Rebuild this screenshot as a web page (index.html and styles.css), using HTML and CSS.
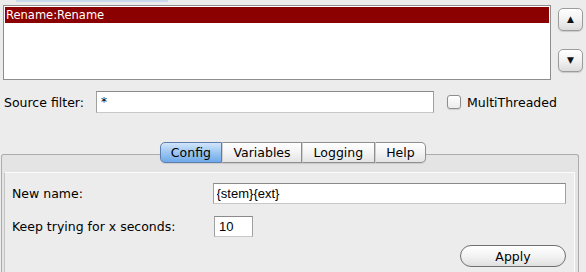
FILE: index.html
```html
<!DOCTYPE html>
<html lang="en">
<head>
    <meta charset="UTF-8">
    <title>Rename</title>
    <link rel="stylesheet" href="styles.css">
</head>
<body>
    <div class="top-strip"></div>

    <!-- step list with move buttons -->
    <div class="list-row">
        <div class="step-list">
            <div class="step selected">Rename:Rename</div>
        </div>
        <div class="move-buttons">
            <button class="move-btn">&#9650;</button>
            <button class="move-btn">&#9660;</button>
        </div>
    </div>

    <div class="filter-row">
        <label class="filter-label">Source filter:</label>
        <input type="text" class="filter-input" value="*">
        <span class="check-box"></span>
        <span class="check-label">MultiThreaded</span>
    </div>

    <div class="tab-area">
        <div class="tab-bar">
            <div class="tab active">Config</div>
            <div class="tab">Variables</div>
            <div class="tab">Logging</div>
            <div class="tab">Help</div>
        </div>
        <div class="tab-pane">
            <div class="tab-content">
                <div class="form-row">
                    <span class="form-label">New name:</span>
                    <input type="text" class="name-input" value="{stem}{ext}">
                </div>
                <div class="form-row">
                    <span class="form-label">Keep trying for x seconds:</span>
                    <input type="text" class="secs-input" value="10">
                </div>
                <div class="apply-row">
                    <button class="apply-btn">Apply</button>
                </div>
            </div>
        </div>
    </div>
</body>
</html>
```

FILE: styles.css
```css
body {
    margin: 0;
    padding: 0;
    background-color: #ececec;
    font-family: "DejaVu Sans", "Liberation Sans", sans-serif;
    font-size: 12.5px;
    color: #000;
    overflow: hidden;
}

.top-strip {
    width: 152px;
    height: 2px;
    margin-left: 16px;
    background-color: #c9d8ea;
}

.list-row {
    display: flex;
    margin-top: 3px;
}

.step-list {
    width: 544px;
    height: 71px;
    margin-left: 3px;
    border: 1px solid #8e8e8e;
    background-color: #fff;
    padding: 1px;
    box-sizing: content-box;
}

.step {
    height: 16px;
    line-height: 16px;
    padding-left: 1px;
    font-size: 11.5px;
}

.step.selected {
    background-color: #8b0000;
    color: #fff;
}

.move-buttons {
    display: flex;
    flex-direction: column;
    justify-content: space-between;
    margin-left: 7px;
    padding-top: 3px;
    height: 64px;
}

.move-btn {
    width: 25px;
    height: 23px;
    margin: 0;
    padding: 0;
    border: 1px solid #9c9c9c;
    border-radius: 5px;
    background: linear-gradient(#ffffff, #f2f2f2 50%, #dcdcdc);
    box-shadow: 0 1px 1px rgba(0, 0, 0, 0.15);
    font-size: 9px;
    line-height: 21px;
    color: #111;
    font-family: "DejaVu Sans", sans-serif;
}

.filter-row {
    display: flex;
    align-items: center;
    margin-top: 11px;
    height: 22px;
}

.filter-label {
    margin-left: 4px;
    width: 92px;
}

.filter-input {
    width: 338px;
    height: 22px;
    box-sizing: border-box;
    border: 1px solid #a0a0a0;
    border-top-color: #8a8a8a;
    border-bottom-color: #c8c8c8;
    padding: 0 4px;
    font-family: "DejaVu Sans", sans-serif;
    font-size: 12px;
    background-color: #fff;
}

.check-box {
    width: 12px;
    height: 12px;
    margin-left: 13px;
    border: 1px solid #8e8e8e;
    border-radius: 3px;
    background: linear-gradient(#ffffff, #ececec);
    box-shadow: 0 1px 1px rgba(0, 0, 0, 0.12);
}

.check-label {
    margin-left: 6px;
}

.tab-area {
    margin-top: 29px;
}

.tab-bar {
    display: flex;
    justify-content: center;
    position: relative;
    z-index: 1;
    margin-bottom: -9px;
}

.tab {
    height: 19px;
    line-height: 19px;
    padding: 0 10.5px;
    border: 1px solid #8f8f8f;
    border-left: 1px solid #cfcfcf;
    background: linear-gradient(#ffffff, #f4f4f4 50%, #e4e4e4);
    box-shadow: 0 1px 1px rgba(0, 0, 0, 0.1);
}

.tab:first-child {
    border-left: 1px solid #6b87b0;
    border-radius: 5px 0 0 5px;
}

.tab:last-child {
    border-radius: 0 5px 5px 0;
}

.tab.active {
    background: linear-gradient(#d2e5fa, #9cc6f1 50%, #6ea9ea);
    border-color: #5e7fae;
    padding: 0 10px;
}

.tab-pane {
    margin-left: 1px;
    width: 578px;
    height: 119px;
    border: 1px solid #acacac;
    border-bottom: none;
    border-radius: 3px 3px 0 0;
    background-color: #e4e4e4;
    padding: 17px 3px 0 2px;
    box-sizing: border-box;
}

.tab-content {
    height: 101px;
    border-top: 1px solid #fbfbfb;
    border-left: 1px solid #c4c4c4;
    border-right: 1px solid #fbfbfb;
    background-color: #ececec;
    padding: 10px 8px 0 7px;
}

.form-row {
    display: flex;
    align-items: center;
    margin-bottom: 12px;
}

.form-label {
    width: 202px;
}

.name-input, .secs-input {
    height: 21px;
    box-sizing: border-box;
    border: 1px solid #a0a0a0;
    border-top-color: #8a8a8a;
    border-bottom-color: #c8c8c8;
    padding: 0 3px;
    font-family: "Liberation Sans", sans-serif;
    font-size: 13px;
    background-color: #fff;
}

.name-input {
    width: 356px;
}

.secs-input {
    width: 39px;
    padding-left: 4px;
}

.apply-row {
    display: flex;
    justify-content: flex-end;
    margin-top: -4px;
}

.apply-btn {
    width: 106px;
    height: 22px;
    border: 1px solid #6f6f6f;
    border-radius: 11px;
    background: linear-gradient(#ffffff, #f3f3f3 50%, #e0e0e0);
    font-family: "DejaVu Sans", sans-serif;
    font-size: 12.5px;
    padding: 0;
}
```
